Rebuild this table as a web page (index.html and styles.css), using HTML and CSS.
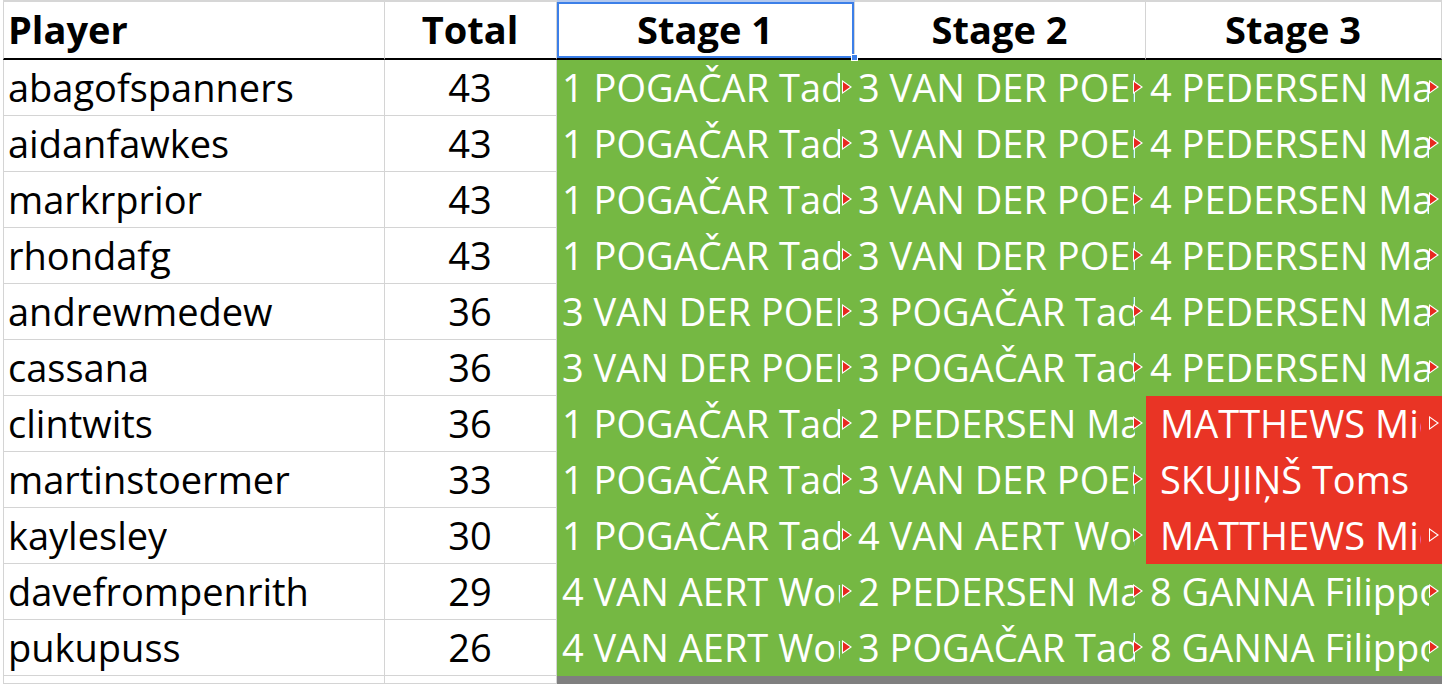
FILE: index.html
```html
<!DOCTYPE html>
<html>
<head>
    <title>Stage Predictions</title>
    <link rel="stylesheet" href="styles.css">
</head>
<body>
    <div class="sheet">
        <div class="strip"></div>
        <div class="strip"></div>
        <div class="strip picked"></div>
        <div class="strip"></div>
        <div class="strip"></div>

        <div class="cell head first">Player</div>
        <div class="cell head center">Total</div>
        <div class="cell head center selected">Stage 1</div>
        <div class="cell head center">Stage 2</div>
        <div class="cell head center">Stage 3</div>
    </div>

    <script>
        // Data pemain
        var players = [
            ["abagofspanners", 43, "1 POGAČAR Tadej", "3 VAN DER POEL Mathieu", "4 PEDERSEN Mads"],
            ["aidanfawkes", 43, "1 POGAČAR Tadej", "3 VAN DER POEL Mathieu", "4 PEDERSEN Mads"],
            ["markrprior", 43, "1 POGAČAR Tadej", "3 VAN DER POEL Mathieu", "4 PEDERSEN Mads"],
            ["rhondafg", 43, "1 POGAČAR Tadej", "3 VAN DER POEL Mathieu", "4 PEDERSEN Mads"],
            ["andrewmedew", 36, "3 VAN DER POEL Mathieu", "3 POGAČAR Tadej", "4 PEDERSEN Mads"],
            ["cassana", 36, "3 VAN DER POEL Mathieu", "3 POGAČAR Tadej", "4 PEDERSEN Mads"],
            ["clintwits", 36, "1 POGAČAR Tadej", "2 PEDERSEN Mads", "MATTHEWS Michael"],
            ["martinstoermer", 33, "1 POGAČAR Tadej", "3 VAN DER POEL Mathieu", "SKUJIŅŠ Toms"],
            ["kaylesley", 30, "1 POGAČAR Tadej", "4 VAN AERT Wout", "MATTHEWS Michael"],
            ["davefrompenrith", 29, "4 VAN AERT Wout", "2 PEDERSEN Mads", "8 GANNA Filippo"],
            ["pukupuss", 26, "4 VAN AERT Wout", "3 POGAČAR Tadej", "8 GANNA Filippo"]
        ];

        var sheet = document.querySelector(".sheet");

        function addCell(cls, text) {
            var cell = document.createElement("div");
            cell.className = "cell " + cls;
            if (text !== undefined) {
                var span = document.createElement("span");
                span.className = "txt";
                span.textContent = text;
                cell.appendChild(span);
            }
            sheet.appendChild(cell);
            return cell;
        }

        for (var i = 0; i < players.length; i++) {
            var p = players[i];
            addCell("first", p[0]);
            addCell("center", p[1]);
            for (var s = 2; s < 5; s++) {
                // tanpa angka di depan = tidak dapat poin
                var missed = !/^\d/.test(p[s]);
                var cell = addCell((missed ? "red" : "green") + " stage" + (s - 1), p[s]);
                var span = cell.firstChild;
                if (span.scrollWidth > span.clientWidth) {
                    cell.classList.add("cut");
                }
            }
        }

        // Baris terakhir yang terpotong
        addCell("first");
        addCell("center");
        addCell("grey");
        addCell("grey");
        addCell("grey");
    </script>
</body>
</html>
```

FILE: styles.css
```css
body {
    margin: 0;
    font-family: "Open Sans", sans-serif;
    font-size: 38px;
    color: #000;
    background-color: #fff;
    overflow: hidden;
}

.sheet {
    display: grid;
    grid-template-columns: 382px 172px 298px 291px 1fr;
    grid-template-rows: 2px 58px repeat(11, 56px) 8px;
    margin-left: 3px;
}

.strip {
    background-color: #d6d6d6;
}

.strip.picked {
    background-color: #b3c8ee;
}

.cell {
    box-sizing: border-box;
    display: flex;
    align-items: center;
    position: relative;
    padding: 0 5px 2px 4px;
    border-right: 1px solid #d4d4d4;
    border-bottom: 1px solid #d4d4d4;
    white-space: nowrap;
    overflow: hidden;
}

.cell.first {
    border-left: 1px solid #d4d4d4;
}

.cell.center {
    justify-content: center;
}

.txt {
    display: block;
    min-width: 0;
    overflow: hidden;
}

.head {
    font-weight: 700;
    border-bottom: 2px solid #000;
    overflow: visible;
}

.head.selected {
    z-index: 1;
    box-shadow: inset 0 0 0 2px #3c7fe8;
}

.head.selected::after {
    content: "";
    position: absolute;
    right: -4px;
    bottom: -3px;
    width: 5px;
    height: 5px;
    background-color: #3c7fe8;
    border: 1px solid #fff;
}

.green {
    background-color: #75b843;
    color: #fff;
    border: none;
}

.red {
    background-color: #e93425;
    color: #fff;
    border: none;
}

.grey {
    background-color: #7f7f7f;
    border: none;
}

.stage1 {
    padding-left: 5px;
    padding-right: 15px;
}

.stage2 {
    padding-left: 3px;
    padding-right: 11px;
}

.stage3 {
    padding-left: 4px;
    padding-right: 13px;
}

.red.stage3 {
    padding-left: 14px;
    padding-right: 21px;
}

/* tanda teks terpotong */
.cut::before,
.cut::after {
    content: "";
    position: absolute;
    top: 50%;
    width: 0;
    height: 0;
    border-style: solid;
    border-color: transparent;
}

.cut::before {
    right: 3px;
    margin-top: -8px;
    border-width: 7px 0 7px 10px;
    border-left-color: #fff;
}

.cut::after {
    right: 5px;
    margin-top: -6px;
    border-width: 5px 0 5px 7px;
    border-left-color: #e8281f;
}

.red.cut::after {
    border-left-color: #e93425;
}
```
